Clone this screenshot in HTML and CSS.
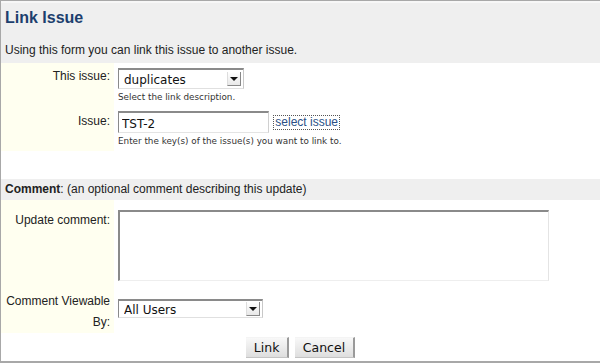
FILE: index.html
```html
<!DOCTYPE html>
<html lang="en">
	<head>
		<title>Link Issue</title>
		<link rel="stylesheet" href="styles.css">
	</head>
	<body>
		<div class="page">
			<div class="head">
				<h2 class="title">Link Issue</h2>
				<p class="intro">Using this form you can link this issue to another issue.</p>
			</div>
			<table class="form">
				<tr class="row-type">
					<td class="label">This issue:</td>
					<td class="field">
						<span class="select select-type">
							<select>
								<option>duplicates</option>
							</select>
						</span>
						<div class="hint">Select the link description.</div>
					</td>
				</tr>
				<tr class="row-issue">
					<td class="label">Issue:</td>
					<td class="field">
						<input class="text" type="text" value="TST-2">
						<a class="picker" href="#">select issue</a>
						<div class="hint">Enter the key(s) of the issue(s) you want to link to.</div>
					</td>
				</tr>
				<tr class="gap">
					<td colspan="2"></td>
				</tr>
				<tr class="section">
					<td colspan="2"><b>Comment</b>: (an optional comment describing this update)</td>
				</tr>
				<tr class="row-comment">
					<td class="label">Update comment:</td>
					<td class="field">
						<textarea class="comment"></textarea>
					</td>
				</tr>
				<tr class="row-level">
					<td class="label">Comment Viewable By:</td>
					<td class="field">
						<span class="select select-level">
							<select>
								<option>All Users</option>
							</select>
						</span>
					</td>
				</tr>
				<tr class="buttons">
					<td colspan="2">
						<button class="btn">Link</button>
						<button class="btn">Cancel</button>
					</td>
				</tr>
			</table>
		</div>
	</body>
</html>
```

FILE: styles.css
```css
* {
  margin: 0;
  padding: 0;
  box-sizing: border-box;
}

body {
  font-family: "Liberation Sans", Arial, sans-serif;
  font-size: 12px;
  color: #222;
  background: #fff;
}

.page {
  width: 600px;
  height: 363px;
  border-left: 1px solid #a8a8a8;
  border-top: 1px solid #a8a8a8;
  border-bottom: 2px solid #a8a8a8;
}

.head {
  height: 62px;
  background: #efefef;
  border-top: 2px solid #f7f7f7;
  padding: 5px 4px 0;
}

.title {
  font-size: 16px;
  font-weight: bold;
  color: #1d3f6e;
  line-height: 20px;
}

.intro {
  margin-top: 15px;
  line-height: 14px;
  color: #222;
}

.form {
  width: 100%;
  border-collapse: collapse;
}

.form td {
  vertical-align: top;
}

.label {
  width: 113px;
  background: #fffff0;
  text-align: right;
  padding: 8px 4px 0 0;
  color: #222;
  line-height: 14px;
}

.field {
  padding-left: 4px;
}

.row-type td {
  height: 44px;
  padding-top: 5px;
}

.row-type .label {
  padding-top: 6px;
}

.row-issue td {
  height: 44px;
  padding-top: 4px;
}

.row-issue .label {
  padding-top: 7px;
}

.hint {
  font-family: "DejaVu Sans", Verdana, sans-serif;
  font-size: 8.8px;
  color: #333;
  margin-top: 3px;
  line-height: 11px;
}

.select {
  position: relative;
  display: inline-block;
  vertical-align: top;
  background: #fff;
  border-top: 2px solid #8a8a8a;
  border-left: 1px solid #8a8a8a;
  border-right: 1px solid #c8c8c8;
  border-bottom: 1px solid #e0e0e0;
}

.select select {
  appearance: none;
  -webkit-appearance: none;
  border: none;
  background: transparent;
  font-family: "DejaVu Sans", "Lucida Grande", sans-serif;
  font-size: 12px;
  color: #111;
  padding: 1px 0 0 5px;
  width: 100%;
  height: 100%;
  outline: none;
}

.select::after {
  content: "";
  position: absolute;
  right: 2px;
  top: 2px;
  width: 12px;
  height: 13px;
  border-left: 1px solid #ddd;
  border-right: 1px solid #888;
  border-bottom: 1px solid #888;
  background: linear-gradient(#fff, #e8e8e8);
}

.select::before {
  content: "";
  position: absolute;
  right: 5px;
  top: 7px;
  border-left: 4px solid transparent;
  border-right: 4px solid transparent;
  border-top: 4px solid #111;
  z-index: 1;
}

.select-type {
  width: 126px;
  height: 21px;
}

.select-level {
  width: 145px;
  height: 19px;
  margin-top: 14px;
}

.select-level::after {
  top: 1px;
}

.select-level::before {
  top: 6px;
}

.text {
  vertical-align: top;
  width: 151px;
  height: 22px;
  border-top: 2px solid #8a8a8a;
  border-left: 1px solid #8a8a8a;
  border-right: 1px solid #d0d0d0;
  border-bottom: 1px solid #e4e4e4;
  font-family: "DejaVu Sans", "Lucida Grande", sans-serif;
  font-size: 12px;
  color: #111;
  padding: 2px 0 0 3px;
  outline: none;
}

.picker,
.picker:visited {
  display: inline-block;
  vertical-align: top;
  margin: 5px 0 0 2px;
  padding: 0 1px;
  color: #2b4f86;
  text-decoration: none;
  line-height: 13px;
  outline: 1px dotted #555;
}

.gap td {
  height: 28px;
}

.section td {
  height: 21px;
  background: #efefef;
  padding: 3px 4px 0;
  line-height: 14px;
}

.row-comment td {
  height: 85px;
  padding-top: 10px;
}

.row-comment .label {
  padding-top: 13px;
}

.comment {
  display: block;
  width: 431px;
  height: 71px;
  resize: none;
  border-top: 2px solid #8a8a8a;
  border-left: 2px solid #8a8a8a;
  border-right: 1px solid #e4e4e4;
  border-bottom: 1px solid #eee;
  outline: none;
}

.row-level td {
  height: 46px;
}

.row-level .label {
  padding-top: 6px;
  line-height: 21px;
}

.buttons td {
  text-align: center;
  padding-top: 4px;
}

.btn {
  font-family: "DejaVu Sans", "Lucida Grande", sans-serif;
  font-size: 12.5px;
  color: #111;
  height: 21px;
  padding: 0 8px;
  margin: 0 1px;
  background: linear-gradient(#f8f8f8, #dedede);
  border: none;
  border-right: 2px solid #9a9a9a;
  border-bottom: 1px solid #c4c4c4;
  border-top: 1px solid #f4f4f4;
}
```
